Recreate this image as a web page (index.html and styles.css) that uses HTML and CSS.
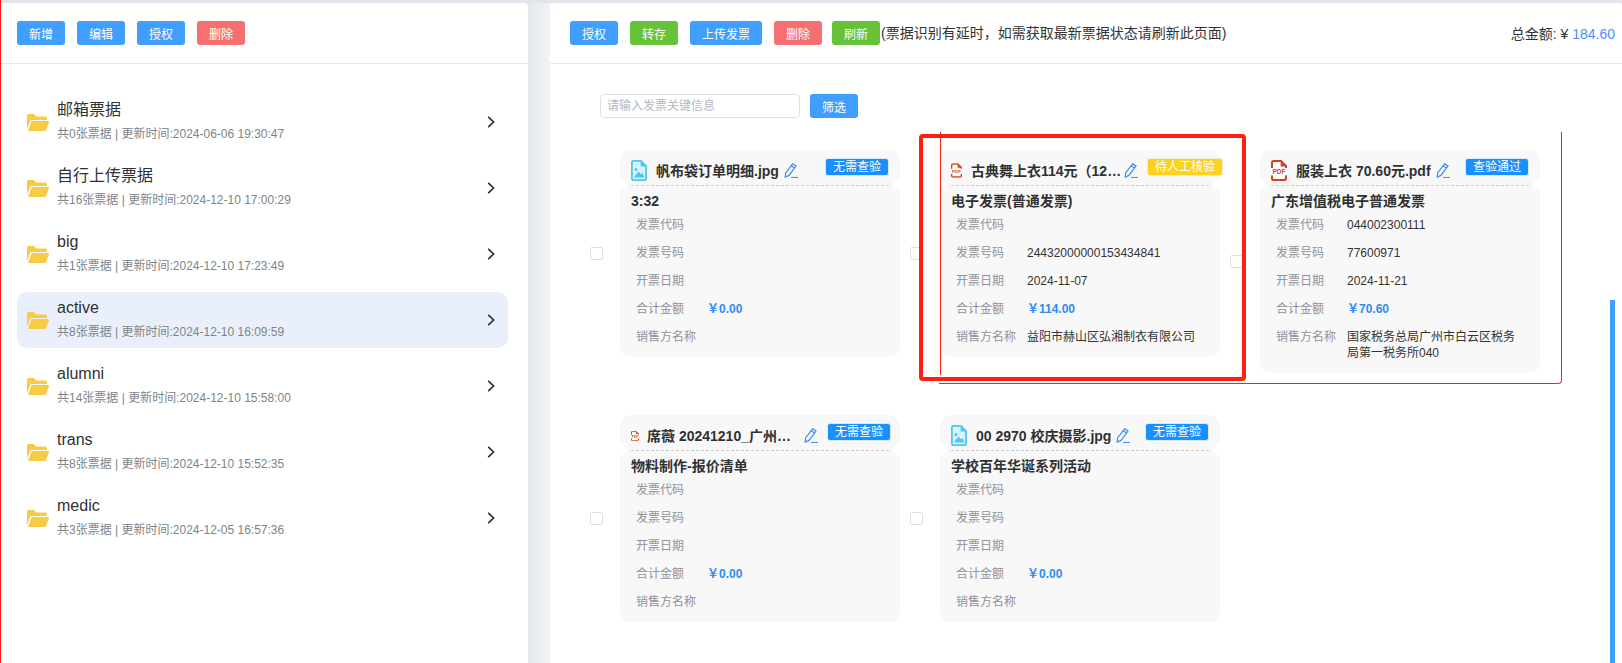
FILE: index.html
```html
<!DOCTYPE html>
<html lang="en">
<head>
    <meta charset="UTF-8">
    <meta name="viewport" content="width=device-width, initial-scale=1.0">
    <title>票据管理</title>
    <link rel="stylesheet" href="styles.css">
</head>
<body>
    <svg class="defs" aria-hidden="true">
        <symbol id="i-folder" viewBox="0 0 22 17">
            <path fill="#f9ca45" d="M0 1.5Q0 0 1.5 0H7L9 2.5H18.5Q20 2.5 20 4V6H5Q3.6 6 3 7.4L0 15Z"/>
            <path fill="#f9ca45" d="M5.5 7H21Q22.4 7 22 8.4L19 15.8Q18.6 17 17.4 17H1L4 8.4Q4.5 7 5.5 7Z"/>
        </symbol>
        <symbol id="i-arrow" viewBox="0 0 8 12">
            <path fill="none" stroke="#303133" stroke-width="1.7" d="M1.2 .8L6.6 6L1.2 11.2"/>
        </symbol>
        <symbol id="i-image" viewBox="0 0 16 21">
            <path fill="#d9f3fc" stroke="#4fc6ef" stroke-width="1.8" d="M2.5 .9H10L15.1 6V18.2Q15.1 20.1 13.2 20.1H2.8Q.9 20.1 .9 18.2V2.8Q.9 .9 2.5 .9Z"/>
            <path fill="#4fc6ef" d="M9.6 .8V6.4H15.2Z"/>
            <circle cx="5" cy="9.6" r="1.5" fill="#4fc6ef"/>
            <path fill="#4fc6ef" d="M2.6 17.6L7.6 11.6L10 14.2L11.4 13L13.6 17.6Z"/>
        </symbol>
        <symbol id="i-pdf" viewBox="0 0 16 21">
            <path fill="#fff" stroke="#d8401a" stroke-width="2" d="M2.8 1H10L15 6V18.2Q15 20 13.2 20H2.8Q1 20 1 18.2V2.8Q1 1 2.8 1Z"/>
            <path fill="#d8401a" d="M9.6 .8V6.4H15.2Z"/>
            <rect x="0" y="8" width="16" height="7.4" fill="#fff"/>
        </symbol>
        <symbol id="i-pencil" viewBox="0 0 14 15">
            <path fill="none" stroke="#3d8bf2" stroke-width="1.2" d="M8.6 .8L12 3L5 12.4L1.2 14L1.6 10ZM7.2 2.8L10.6 5"/>
            <path fill="none" stroke="#3d8bf2" stroke-width="1" d="M7 14.4H14"/>
        </symbol>
    </svg>

    <div class="page">
        <!-- 左侧文件夹 -->
        <aside class="panel panel-left">
            <div class="toolbar">
                <button class="btn btn-blue">新增</button>
                <button class="btn btn-blue">编辑</button>
                <button class="btn btn-blue">授权</button>
                <button class="btn btn-red">删除</button>
            </div>
            <ul class="folders">
                <li class="folder">
                    <svg class="folder-icon"><use href="#i-folder"/></svg>
                    <div class="folder-text">
                        <div class="folder-name">邮箱票据</div>
                        <div class="folder-sub">共0张票据 | 更新时间:2024-06-06 19:30:47</div>
                    </div>
                    <svg class="folder-arrow"><use href="#i-arrow"/></svg>
                </li>
                <li class="folder">
                    <svg class="folder-icon"><use href="#i-folder"/></svg>
                    <div class="folder-text">
                        <div class="folder-name">自行上传票据</div>
                        <div class="folder-sub">共16张票据 | 更新时间:2024-12-10 17:00:29</div>
                    </div>
                    <svg class="folder-arrow"><use href="#i-arrow"/></svg>
                </li>
                <li class="folder">
                    <svg class="folder-icon"><use href="#i-folder"/></svg>
                    <div class="folder-text">
                        <div class="folder-name">big</div>
                        <div class="folder-sub">共1张票据 | 更新时间:2024-12-10 17:23:49</div>
                    </div>
                    <svg class="folder-arrow"><use href="#i-arrow"/></svg>
                </li>
                <li class="folder folder-active">
                    <svg class="folder-icon"><use href="#i-folder"/></svg>
                    <div class="folder-text">
                        <div class="folder-name">active</div>
                        <div class="folder-sub">共8张票据 | 更新时间:2024-12-10 16:09:59</div>
                    </div>
                    <svg class="folder-arrow"><use href="#i-arrow"/></svg>
                </li>
                <li class="folder">
                    <svg class="folder-icon"><use href="#i-folder"/></svg>
                    <div class="folder-text">
                        <div class="folder-name">alumni</div>
                        <div class="folder-sub">共14张票据 | 更新时间:2024-12-10 15:58:00</div>
                    </div>
                    <svg class="folder-arrow"><use href="#i-arrow"/></svg>
                </li>
                <li class="folder">
                    <svg class="folder-icon"><use href="#i-folder"/></svg>
                    <div class="folder-text">
                        <div class="folder-name">trans</div>
                        <div class="folder-sub">共8张票据 | 更新时间:2024-12-10 15:52:35</div>
                    </div>
                    <svg class="folder-arrow"><use href="#i-arrow"/></svg>
                </li>
                <li class="folder">
                    <svg class="folder-icon"><use href="#i-folder"/></svg>
                    <div class="folder-text">
                        <div class="folder-name">medic</div>
                        <div class="folder-sub">共3张票据 | 更新时间:2024-12-05 16:57:36</div>
                    </div>
                    <svg class="folder-arrow"><use href="#i-arrow"/></svg>
                </li>
            </ul>
        </aside>

        <!-- 右侧票据 -->
        <main class="panel panel-right">
            <div class="toolbar toolbar-right">
                <button class="btn btn-blue">授权</button>
                <button class="btn btn-green">转存</button>
                <button class="btn btn-blue">上传发票</button>
                <button class="btn btn-red">删除</button>
                <button class="btn btn-green btn-tight">刷新</button>
                <span class="toolbar-note">(票据识别有延时，如需获取最新票据状态请刷新此页面)</span>
                <span class="total">总金额: ¥ <em>184.60</em></span>
            </div>

            <div class="filter">
                <input class="filter-input" type="text" placeholder="请输入发票关键信息">
                <button class="btn btn-blue">筛选</button>
            </div>

            <div class="cards">
                <div class="slot">
                    <span class="check"></span>
                    <div class="card">
                        <div class="card-head">
                            <svg class="file-icon"><use href="#i-image"/></svg>
                            <span class="card-name">帆布袋订单明细.jpg</span>
                            <svg class="pencil"><use href="#i-pencil"/></svg>
                            <span class="tag">无需查验</span>
                        </div>
                        <div class="card-title">3:32</div>
                        <div class="row"><span class="row-label">发票代码</span></div>
                        <div class="row"><span class="row-label">发票号码</span></div>
                        <div class="row"><span class="row-label">开票日期</span></div>
                        <div class="row"><span class="row-label">合计金额</span><span class="row-value amount">￥0.00</span></div>
                        <div class="row"><span class="row-label">销售方名称</span></div>
                    </div>
                </div>

                <div class="slot">
                    <span class="check"></span>
                    <div class="card">
                        <div class="card-head">
                            <svg class="file-icon file-icon-md" viewBox="0 0 16 21"><use href="#i-pdf"/><text class="pdf-text" x="8" y="14">PDF</text></svg>
                            <span class="card-name">古典舞上衣114元（12…</span>
                            <svg class="pencil pencil-near"><use href="#i-pencil"/></svg>
                            <span class="tag tag-yellow">待人工核验</span>
                        </div>
                        <div class="card-title">电子发票(普通发票)</div>
                        <div class="row"><span class="row-label">发票代码</span></div>
                        <div class="row"><span class="row-label">发票号码</span><span class="row-value">24432000000153434841</span></div>
                        <div class="row"><span class="row-label">开票日期</span><span class="row-value">2024-11-07</span></div>
                        <div class="row"><span class="row-label">合计金额</span><span class="row-value amount">￥114.00</span></div>
                        <div class="row"><span class="row-label">销售方名称</span><span class="row-value">益阳市赫山区弘湘制衣有限公司</span></div>
                    </div>
                </div>

                <div class="slot">
                    <span class="check"></span>
                    <div class="card">
                        <div class="card-head">
                            <svg class="file-icon" viewBox="0 0 16 21"><use href="#i-pdf"/><text class="pdf-text" x="8" y="14">PDF</text></svg>
                            <span class="card-name">服装上衣 70.60元.pdf</span>
                            <svg class="pencil"><use href="#i-pencil"/></svg>
                            <span class="tag">查验通过</span>
                        </div>
                        <div class="card-title">广东增值税电子普通发票</div>
                        <div class="row"><span class="row-label">发票代码</span><span class="row-value">044002300111</span></div>
                        <div class="row"><span class="row-label">发票号码</span><span class="row-value">77600971</span></div>
                        <div class="row"><span class="row-label">开票日期</span><span class="row-value">2024-11-21</span></div>
                        <div class="row"><span class="row-label">合计金额</span><span class="row-value amount">￥70.60</span></div>
                        <div class="row"><span class="row-label">销售方名称</span><span class="row-value">国家税务总局广州市白云区税务局第一税务所040</span></div>
                    </div>
                </div>

                <div class="slot">
                    <span class="check"></span>
                    <div class="card">
                        <div class="card-head">
                            <svg class="file-icon file-icon-sm" viewBox="0 0 16 21"><use href="#i-pdf"/><text class="pdf-text" x="8" y="14">PDF</text></svg>
                            <span class="card-name">席薇 20241210_广州…</span>
                            <svg class="pencil pencil-far"><use href="#i-pencil"/></svg>
                            <span class="tag tag-r10">无需查验</span>
                        </div>
                        <div class="card-title">物料制作-报价清单</div>
                        <div class="row"><span class="row-label">发票代码</span></div>
                        <div class="row"><span class="row-label">发票号码</span></div>
                        <div class="row"><span class="row-label">开票日期</span></div>
                        <div class="row"><span class="row-label">合计金额</span><span class="row-value amount">￥0.00</span></div>
                        <div class="row"><span class="row-label">销售方名称</span></div>
                    </div>
                </div>

                <div class="slot">
                    <span class="check"></span>
                    <div class="card">
                        <div class="card-head">
                            <svg class="file-icon"><use href="#i-image"/></svg>
                            <span class="card-name">00 2970 校庆摄影.jpg</span>
                            <svg class="pencil"><use href="#i-pencil"/></svg>
                            <span class="tag">无需查验</span>
                        </div>
                        <div class="card-title">学校百年华诞系列活动</div>
                        <div class="row"><span class="row-label">发票代码</span></div>
                        <div class="row"><span class="row-label">发票号码</span></div>
                        <div class="row"><span class="row-label">开票日期</span></div>
                        <div class="row"><span class="row-label">合计金额</span><span class="row-value amount">￥0.00</span></div>
                        <div class="row"><span class="row-label">销售方名称</span></div>
                    </div>
                </div>
            </div>

            <div class="scroll-thumb"></div>
        </main>

        <!-- 红色标注 -->
        <div class="mark mark-page"></div>
        <div class="mark mark-box"></div>
        <div class="mark mark-line"></div>
        <div class="mark mark-frame"></div>
    </div>
</body>
</html>
```

FILE: styles.css
```css
* {
    padding: 0;
    margin: 0;
    box-sizing: border-box;
}
html, body {
    height: 100%;
    overflow: hidden;
}
body {
    font-family: "Liberation Sans", "Noto Sans CJK SC", sans-serif;
    font-size: 12px;
    color: #303133;
}
.defs {
    position: absolute;
    width: 0;
    height: 0;
}
.pdf-text {
    font-family: "Liberation Sans", sans-serif;
    font-size: 6.4px;
    font-weight: bold;
    fill: #d8401a;
    text-anchor: middle;
}

.page {
    position: relative;
    display: flex;
    height: 100%;
    padding-top: 3px;
    gap: 22px;
    background: linear-gradient(to right, #e4e7ec 528px, #f1f3f6 550px);
}
.page::before {
    content: "";
    position: absolute;
    top: 0;
    left: 0;
    right: 0;
    height: 3px;
    background: #e2e5ec;
}
.panel {
    background: #fff;
    border-radius: 4px 4px 0 0;
}
.panel-left {
    flex: 0 0 528px;
}
.panel-right {
    position: relative;
    flex: 1;
    min-width: 0;
}

/* 工具栏 */
.toolbar {
    display: flex;
    align-items: center;
    gap: 12px;
    height: 61px;
    padding-left: 17px;
    border-bottom: 1px solid #e4e7ed;
}
.toolbar-right {
    padding-left: 20px;
    padding-right: 7px;
}
.toolbar-note {
    margin-left: -11px;
    font-size: 14px;
    line-height: 20px;
    color: #333;
}
.total {
    margin-left: auto;
    font-size: 14px;
    color: #333;
}
.total em {
    font-style: normal;
    color: #4e8cff;
}
.btn {
    height: 24px;
    padding: 0 12px;
    border: 0;
    border-radius: 3px;
    font-family: inherit;
    font-size: 12px;
    color: #fff;
    white-space: nowrap;
}
.btn-blue {
    background: #409eff;
}
.btn-green {
    background: #67c23a;
}
.btn-red {
    background: #f77070;
}
.btn-tight {
    margin-left: -2px;
}

/* 文件夹 */
.folders {
    list-style: none;
    padding: 30px 20px 0 17px;
}
.folder {
    display: flex;
    align-items: center;
    height: 56px;
    margin-bottom: 10px;
    padding: 0 13px 0 10px;
    border-radius: 10px;
}
.folder-active {
    background: #e9f0fb;
}
.folder-icon {
    flex: none;
    width: 22px;
    height: 17px;
}
.folder-text {
    flex: 1;
    padding: 0 0 3px 8px;
}
.folder-name {
    font-size: 16px;
    line-height: 22px;
    color: #303133;
}
.folder-sub {
    margin-top: 5px;
    line-height: 16px;
    color: #808488;
}
.folder-arrow {
    flex: none;
    width: 8px;
    height: 12px;
}

/* 筛选 */
.filter {
    display: flex;
    gap: 10px;
    padding: 30px 0 0 50px;
}
.filter-input {
    width: 200px;
    height: 24px;
    padding: 0 6px;
    border: 1px solid #dcdfe6;
    border-radius: 4px;
    font-family: inherit;
    font-size: 12px;
    outline: none;
}
.filter-input::placeholder {
    color: #b4b8c0;
}

/* 票据卡片 */
.cards {
    display: grid;
    grid-template-columns: repeat(3, 320px);
    align-items: start;
    row-gap: 42px;
    padding: 32px 0 0 40px;
}
.slot {
    display: flex;
    align-items: center;
}
.check {
    flex: none;
    width: 13px;
    height: 13px;
    margin-right: 17px;
    background: #fff;
    border: 1px solid #dcdfe6;
    border-radius: 2px;
}
.card {
    flex: none;
    width: 280px;
    background: #f8f8f8;
    border-radius: 10px;
}
.card-head {
    position: relative;
    display: flex;
    align-items: center;
    height: 36px;
    margin: 0 11px;
    padding-top: 6px;
    border-bottom: 1px dashed #ccc;
}
.card-head::before,
.card-head::after {
    content: "";
    position: absolute;
    bottom: -5px;
    width: 14px;
    height: 10px;
    background: #fff;
    border-radius: 5px;
}
.card-head::before {
    left: -18px;
}
.card-head::after {
    right: -18px;
}
.file-icon {
    flex: none;
    width: 16px;
    height: 21px;
    margin-right: 9px;
}
.file-icon-md {
    width: 11px;
    height: 15px;
}
.file-icon-sm {
    width: 8px;
    height: 12px;
    margin-right: 8px;
}
.card-name {
    font-size: 14px;
    font-weight: bold;
    line-height: 20px;
    color: #303133;
    white-space: nowrap;
}
.pencil {
    flex: none;
    width: 14px;
    height: 15px;
    margin-left: 5px;
}
.pencil-near {
    margin-left: 3px;
}
.pencil-far {
    margin-left: 13px;
}
.tag {
    position: absolute;
    top: 8px;
    right: 0;
    height: 18px;
    padding: 0 7px;
    background: #1890ff;
    border: 1px solid #d6e9ff;
    border-radius: 3px;
    font-size: 12px;
    line-height: 16px;
    color: #fff;
    white-space: nowrap;
}
.tag-yellow {
    right: -14px;
    background: #fdd21f;
    border-color: #f3edc8;
}
.tag-r10 {
    right: -2px;
}
.card-title {
    padding: 5px 0 6px 11px;
    font-size: 14px;
    font-weight: bold;
    line-height: 20px;
    color: #303133;
}
.row {
    display: flex;
    min-height: 16px;
    margin-bottom: 12px;
    padding-left: 16px;
    line-height: 16px;
}
.row-label {
    flex: none;
    width: 71px;
    color: #909399;
}
.row-value {
    width: 175px;
    color: #333;
}
.amount {
    font-weight: bold;
    color: #2d8cf0;
}
.scroll-thumb {
    position: absolute;
    top: 297px;
    bottom: 0;
    left: 1060px;
    width: 5px;
    background: #409eff;
}

/* 红色标注，盖在页面上 */
.mark {
    position: absolute;
    pointer-events: none;
}
.mark-page {
    top: 0;
    bottom: 0;
    left: 0;
    width: 1px;
    background: #ff1e10;
}
.mark-box {
    top: 134px;
    left: 919px;
    width: 327px;
    height: 247px;
    border: 4px solid #ff1e10;
    border-radius: 4px;
}
.mark-line {
    top: 132px;
    left: 940px;
    width: 1px;
    height: 243px;
    background: #ff1e10;
}
.mark-frame {
    top: 132px;
    left: 939px;
    width: 623px;
    height: 252px;
    border-right: 1px solid #ff1e10;
    border-bottom: 1px solid #ff1e10;
    border-bottom-right-radius: 4px;
}
```
